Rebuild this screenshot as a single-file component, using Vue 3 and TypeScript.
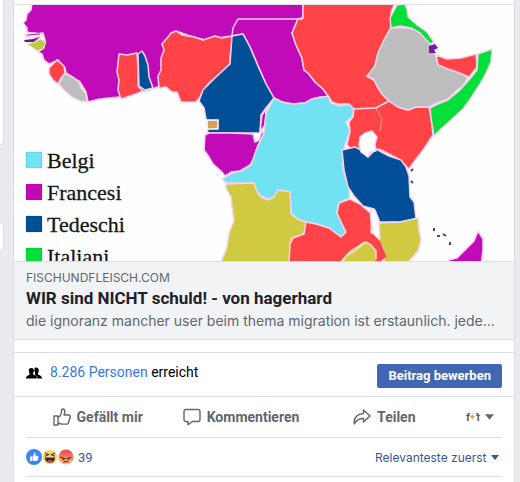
<script setup lang="ts">
import { ref } from 'vue'

interface Region {
  fill: string
  d: string
}

interface LegendEntry {
  label: string
  color: string
}

const colors = {
  french: '#c20bb8',
  british: '#ff4347',
  german: '#034f97',
  belgian: '#70e2f1',
  portuguese: '#d0ca40',
  italian: '#04df3c',
  spanish: '#d6a05c',
  free: '#bdbdbd',
}

const regions: Region[] = [
  { fill: colors.french, d: 'M32 3L31 10L27 14L26 20L23 23L27 28L27 32L35 34L43 33L45 40L44 48L38 52L42 54L44 60L49 64L58 60L65 68L66 73L80 82L86 92L88 102L100 99L119 97L150 90L160 86L176 31L190 36L205 40L232 36L243 34L250 47L258 66L266 84L274 98L282 102L292 104L305 103L312 99L320 97L329 97L323 89L315 82L309 74L304 70L302 58L296 45L292 33L298 19L303 18V3Z' },
  { fill: colors.british, d: 'M159 88L158 76L161 70L161 58L164 50L162 44L168 37L171 33L176 31L182 35L194 37L203 40L215 36L222 38L232 36L232 46L230 56L230 64L218 75L209 83L203 90L200 97L196 102L181 102L177 92L172 92L166 87Z' },
  { fill: colors.british, d: 'M119 54L127 55L137 53L138 68L138 86L143 91L133 95L121 99L118 90L119 80L117 72Z' },
  { fill: colors.german, d: 'M138 54L142 51L145 56L148 65L149 77L153 88L145 90L139 86Z' },
  { fill: colors.british, d: 'M49 68L53 64L57 60L64 66L65 73L61 78L58 84L53 80L49 74Z' },
  { fill: colors.free, d: 'M59 84L65 73L74 78L79 82L81 88L86 94L87 102L80 101L72 97L63 89Z' },
  { fill: colors.german, d: 'M232 36L243 34L250 47L258 66L266 84L274 98L266 108L261 115L260 133H208L206 119L204 108L199 101L203 90L215 78L230 64Z' },
  { fill: colors.french, d: 'M269 105L266 112L265 125L260 132L262 115Z' },
  { fill: colors.french, d: 'M205 135L209 133L232 133L253 134L255 142L259 140L262 131L264 134L258 145L254 158L250 165L240 171L231 172L225 176L221 171L213 164L209 157L204 150Z' },
  { fill: colors.belgian, d: 'M274 98L282 102L292 104L305 103L312 99L323 97L328 96L331 103L340 106L350 104L354 110L352 117L346 122L350 131L345 145L343 155L343 170L349 188L350 198L339 203L337 213L342 224L346 232L341 237L329 228L316 224L306 222L298 219L291 213L290 192L278 190L274 197L268 199L261 196L256 190L254 183L226 183L222 179L232 173L242 171L251 165L257 148L264 133L266 114Z' },
  { fill: colors.british, d: 'M303 3H395L391 12L391 27L384 40L378 53L375 65L373 70L367 76L374 80L377 86L382 94L389 101L376 108L354 109L349 104L338 104L332 102L329 97L323 89L315 82L309 74L304 70L302 58L296 45L292 33L298 19L303 18Z' },
  { fill: colors.british, d: 'M354 109L376 108L389 101L398 107L408 110L416 107L429 107L431 118L433 135L423 150L413 163L409 169L402 162L397 158L389 154L379 149L368 155L352 149L347 145L350 131L349 122L353 117Z' },
  { fill: colors.german, d: 'M342 150L355 147L361 150L368 157L376 149L389 156L401 160L406 167L409 176L410 197L414 202L416 219L400 222L379 222L374 209L363 206L354 196L348 187L344 170Z' },
  { fill: '#ffffff', d: 'M360 137L365 133L372 131L377 137L375 144L376 151L370 152L368 157L361 152L359 145Z' },
  { fill: colors.free, d: 'M391 28L405 28L418 30L430 42L435 54L439 65L448 69L457 72L468 77L463 86L457 90L448 99L437 103L429 107L416 107L408 110L398 107L389 101L382 94L377 86L374 80L367 76L375 66L378 53L384 40Z' },
  { fill: colors.italian, d: 'M397 5L405 4L407 9L408 17L417 25L427 32L434 42L430 44L420 33L411 28L400 26L391 28L390 18Z' },
  { fill: colors.british, d: 'M436 55L447 59L461 58L476 54L477 67L469 77L457 72L448 69L438 65Z' },
  { fill: colors.italian, d: 'M478 54L492 49L491 62L486 73L480 84L471 98L463 109L451 120L443 127L434 136L431 118L430 108L438 104L448 100L459 91L469 80L477 70Z' },
  { fill: colors.portuguese, d: 'M226 184L254 183L257 192L261 197L268 200L274 197L278 190L290 192L291 214L297 219L306 222L304 234L292 238L290 244L290 265H220L227 247L229 233L234 221L232 207L231 197L226 188Z' },
  { fill: colors.british, d: 'M306 222L316 224L329 228L341 237L346 232L342 224L337 213L339 203L350 199L360 204L368 211L372 214L371 232L374 240L381 245L384 256L380 265H289L290 244L293 238L304 234Z' },
  { fill: colors.portuguese, d: 'M379 223L400 222L418 218L419 230L421 240L418 251L411 259L405 265H383L385 256L382 246L379 243Z' },
  { fill: colors.portuguese, d: 'M341 265L346 256L355 251L366 242L371 245L376 251L376 259L380 265Z' },
  { fill: '#ffffff', d: 'M370 210L375 210L379 220L380 239L375 240L372 230Z' },
  { fill: colors.french, d: 'M446 265L449 260L457 258L465 250L474 241L478 231L483 239L483 250L481 265Z' },
]

const legend: LegendEntry[] = [
  { label: 'Belgi', color: colors.belgian },
  { label: 'Francesi', color: colors.french },
  { label: 'Tedeschi', color: colors.german },
  { label: 'Italiani', color: colors.italian },
]

const sortOrder = ref('relevant')
const liked = ref(false)
</script>

<template>
  <div class="page">
    <aside class="rail">
      <div class="rail-box rail-top"></div>
      <div class="rail-box rail-small"></div>
    </aside>

    <article class="card">
      <a class="preview" href="#">
        <svg class="map" viewBox="14 5 500 256" role="img" aria-label="Belgi, Francesi, Tedeschi, Italiani">
          <rect x="14" y="5" width="500" height="257" fill="#fefefe" />
          <g stroke="#f6d3ea" stroke-width="1.5" stroke-linejoin="round">
            <path v-for="(region, i) in regions" :key="i" :d="region.d" :fill="region.fill" />
          </g>
          <!-- Chad's northern border -->
          <path d="M232 36L233 28L238 19H303" fill="none" stroke="#f6d3ea" stroke-width="1.5" />
          <!-- Gambia, Casamance and Guinea-Bissau -->
          <path d="M24 34L34 32L43 34L42 38L25 38Z" fill="#f7dff2" />
          <path d="M27 35L40 34" stroke="#8c3a86" stroke-width="1" />
          <path d="M24 40L33 39L40 37L34 42L25 42Z" fill="#7b118f" />
          <path d="M27 44L35 42L40 39L46 42L43 49L37 51L32 47Z" fill="#bccb43" stroke="#f5e3cf" />
          <!-- Equatorial Guinea and Djibouti -->
          <rect x="207" y="120" width="11" height="9" :fill="colors.spanish" stroke="#ffffff" stroke-width="1.5" />
          <path d="M429 46L435 44L438 48L434 50L436 53L429 53Z" fill="#7618a5" />
          <!-- Border lines in Central Africa -->
          <path d="M376 109L382 118L380 131" fill="none" stroke="#f4a58f" />
          <path d="M341 262L350 252L365 242" fill="none" stroke="#fbe9a5" stroke-width="2" />
          <path d="M371 235L378 242L384 256L376 262" fill="none" stroke="#ff4347" stroke-width="4" />
          <!-- Islands -->
          <path d="M434 228v3M437 236h3M443 234l3 2M450 242v3M411 171l2-2M411 181l2 2" stroke="#6a356c" stroke-width="2" fill="none" />
          <g v-for="(entry, i) in legend" :key="entry.label">
            <rect x="26" :y="152 + i * 32" width="16" height="16" :fill="entry.color" stroke="#00000022" />
            <text class="legend" x="47" :y="168 + i * 32">{{ entry.label }}</text>
          </g>
        </svg>
        <div class="summary">
          <span class="domain">FISCHUNDFLEISCH.COM</span>
          <strong class="title">WIR sind NICHT schuld! - von hagerhard</strong>
          <span class="description">die ignoranz mancher user beim thema migration ist erstaunlich. jede...</span>
        </div>
      </a>

      <section class="reach">
        <svg class="people" viewBox="0 0 16 12" aria-hidden="true">
          <path d="M10 0.5c2 0 3 1.300 2.800 3.300-.1 1.500-.8 2.200-.8 3.100 0 1.100 3.500 1.300 3.800 3.300L16 11.500h-4.500c-.2-2.200-1.200-2.800-3-3.500.9-1 .8-1.900.2-3.300C8 2.500 8.300.5 10 .5z" />
          <path d="M5.300 1c1.900 0 2.800 1.200 2.600 3.100-.1 1.300-.9 2-.9 3 0 1.200 3.500 1.200 3.800 3.300v1.100H0c0-3.200 3.700-2.900 3.700-4.400 0-.9-.8-1.600-.9-3C2.600 2.200 3.500 1 5.300 1z" />
        </svg>
        <p class="reach-text"><a href="#">8.286 Personen</a> erreicht</p>
        <button class="promote" type="button">Beitrag bewerben</button>
      </section>

      <div class="actions">
        <button class="action" type="button" :aria-pressed="liked" @click="liked = !liked">
          <svg class="icon" viewBox="0 0 18 18" aria-hidden="true">
            <path d="M1 8h4v9H1zM5 9.500C8 8 8.500 5.500 8.500 3 8.500 1.500 9 1 9.800 1c1.400 0 2 1.200 2 2.600 0 1.500-.5 2.400-.8 3.400h4.500c1.200 0 1.800.8 1.800 1.700 0 .7-.4 1.100-.8 1.300.5.7.4 1.700-.4 2.200.3.900 0 1.600-.7 2 .2 1.300-.5 1.900-1.800 1.900H9.500c-1.700 0-2.500-.8-4.500-.8" />
          </svg>
          Gefällt mir
        </button>
        <button class="action" type="button">
          <svg class="icon" viewBox="0 0 18 18" aria-hidden="true">
            <path d="M3 1.500h12Q17 1.500 17 3.500v8q0 2-2 2H9.500L5 16.700v-3.200H3q-2 0-2-2v-8q0-2 2-2z" />
          </svg>
          Kommentieren
        </button>
        <button class="action" type="button">
          <svg class="icon" viewBox="0 0 18 18" aria-hidden="true">
            <path d="M10.500 2L17 8l-6.500 6v-3.500C6 10.300 3.500 12 1.200 16 .8 10 4 6 10.500 5.500z" />
          </svg>
          Teilen
        </button>
        <button class="identity" type="button" aria-label="f+f">
          <svg class="brand" viewBox="0 0 16 12" aria-hidden="true">
            <text x="1" y="10">f</text>
            <text class="plus" x="5" y="9">+</text>
            <text x="0" y="10" transform="translate(15 0) scale(-1 1)">f</text>
          </svg>
          <svg class="caret" viewBox="0 0 10 6" aria-hidden="true"><path d="M0 0h10L5 6z" /></svg>
        </button>
      </div>

      <footer class="feedback">
        <a class="reactions" href="#">
          <svg class="faces" viewBox="0 0 48 16" aria-hidden="true">
            <defs>
              <linearGradient id="anger" x1="0" y1="0" x2="0" y2="1">
                <stop offset="0.100" stop-color="#ee4b57" />
                <stop offset="0.900" stop-color="#fbb66c" />
              </linearGradient>
            </defs>
            <circle cx="40" cy="8" r="7.500" fill="url(#anger)" />
            <path d="M35 8.300L39 9.800M45 8.300L41 9.800M37.800 13Q40 12 42.200 13" fill="none" stroke="#4b2634" stroke-width="1.100" stroke-linecap="round" />
            <circle cx="37.300" cy="10.200" r="0.800" fill="#4b2634" />
            <circle cx="42.700" cy="10.200" r="0.800" fill="#4b2634" />
            <circle cx="24" cy="8" r="8" fill="#fff" />
            <circle cx="24" cy="8" r="7.300" fill="#fbd56f" />
            <path d="M19 4l3.500 1.800L19 7.300M29 4l-3.500 1.800L29 7.300" fill="none" stroke="#4b3a2b" stroke-width="1.100" />
            <path d="M19 8.500h10c0 3.300-2 5.300-5 5.300s-5-2-5-5.300z" fill="#3d2835" />
            <path d="M21 12.300q3-2 6 0-3 2.500-6 0z" fill="#f1505f" />
            <circle cx="8" cy="8" r="8" fill="#3f84f2" />
            <path d="M4 7.500h2v4.500H4zM6.500 7.500C8 6.500 7.500 5 8 3.800c.9-.5 1.800.3 1.600 1.500L9.300 6.700h2.200c1 0 1.200.9.700 1.400.4.400.3 1-.1 1.300.2.500 0 .9-.4 1.200.1.800-.4 1.400-1.300 1.400H8.300c-.8 0-1.200-.3-1.800-.5z" fill="#fff" />
          </svg>
          <span>39</span>
        </a>
        <label class="sort">
          <select v-model="sortOrder" aria-label="Relevanteste zuerst">
            <option value="relevant">Relevanteste zuerst</option>
          </select>
          <svg class="caret small" viewBox="0 0 10 6" aria-hidden="true"><path d="M0 0h10L5 6z" /></svg>
        </label>
      </footer>
    </article>
  </div>
</template>

<style>
body {
  background: #e9ebee;
}
</style>

<style scoped>
.page {
  display: grid;
  grid-template-columns: 4px 1fr;
  column-gap: 9px;
  min-height: 100vh;
  box-sizing: border-box;
  padding-right: 5px;
  font-family: Roboto, "Liberation Sans", sans-serif;
  color: #1d2129;
}

.rail {
  display: flex;
  flex-direction: column;
  gap: 77px;
}

.rail-box {
  background: #fff;
  border: 1px solid #dddfe2;
  border-left: 0;
  box-sizing: border-box;
}

.rail-top {
  height: 145px;
  border-top: 0;
  border-radius: 0 0 3px 0;
}

.rail-small {
  height: 29px;
  border-radius: 0 3px 3px 0;
}

.card {
  min-width: 0;
  padding-top: 4px;
  background: #fff;
  border: 1px solid #dddfe2;
  border-width: 0 1px;
}

.preview {
  display: block;
  color: inherit;
  text-decoration: none;
  border: 1px solid #dddfe2;
  border-width: 1px 0;
}

.map {
  display: block;
  width: 100%;
}

.legend {
  font-family: "Liberation Serif", serif;
  font-size: 22px;
  fill: #161616;
  stroke: #161616;
  stroke-width: 0.3px;
}

.summary {
  display: flex;
  flex-direction: column;
  padding: 8px 12px;
  background: #f2f3f5;
  border-top: 1px solid #dddfe2;
}

.domain {
  font-family: Inter, Roboto, sans-serif;
  font-size: 12px;
  line-height: 16px;
  color: #606770;
}

.title {
  font-size: 17px;
  line-height: 24px;
  font-weight: 700;
}

.description {
  overflow: hidden;
  font-family: Inter, Roboto, sans-serif;
  font-size: 14px;
  line-height: 21px;
  color: #606770;
  white-space: nowrap;
}

.reach {
  display: flex;
  align-items: center;
  gap: 8px;
  height: 43px;
  margin-top: 12px;
  padding: 0 12px;
  border: 1px solid #dddfe2;
  border-width: 1px 0;
}

.people {
  width: 16px;
  height: 12px;
  margin-bottom: 4px;
}

.reach-text {
  flex: 1;
  margin: 0 0 6px;
  font-size: 14px;
  line-height: 18px;
  color: #000;
}

.reach-text a {
  color: #3578e5;
  text-decoration: none;
}

button,
select {
  margin: 0;
  padding: 0;
  border: 0;
  background: none;
  font-family: inherit;
  cursor: pointer;
}

.promote {
  height: 24px;
  margin-top: 2px;
  padding: 0 11px;
  border-radius: 2px;
  background: #4267b2;
  color: #fff;
  font-size: 13px;
  font-weight: 700;
}

.actions {
  display: flex;
  height: 40px;
  margin: 0 12px;
  border-bottom: 1px solid #dddfe2;
}

.action {
  display: flex;
  flex: 1;
  align-items: center;
  justify-content: center;
  gap: 6px;
  color: #606770;
  font-size: 14px;
  font-weight: 700;
}

.icon {
  width: 18px;
  height: 18px;
  fill: none;
  stroke: #606770;
  stroke-width: 1.4;
  stroke-linejoin: round;
}

.identity {
  display: flex;
  align-items: center;
  justify-content: flex-end;
  gap: 4px;
  width: 46px;
  padding-right: 8px;
}

.brand {
  width: 16px;
  height: 12px;
  font-size: 11px;
  font-weight: 700;
  fill: #5f5c58;
}

.plus {
  font-size: 9px;
  fill: #f39a1f;
}

.caret {
  width: 9px;
  height: 6px;
  fill: #606770;
}

.feedback {
  display: flex;
  align-items: center;
  justify-content: space-between;
  height: 38px;
  margin: 0 12px;
  border-bottom: 1px solid #dddfe2;
}

.reactions {
  display: flex;
  align-items: center;
  gap: 4px;
  color: #385898;
  font-size: 13px;
  text-decoration: none;
}

.faces {
  width: 48px;
  height: 16px;
}

.sort {
  display: flex;
  align-items: center;
  gap: 4px;
  padding-right: 3px;
}

.sort select {
  appearance: none;
  color: #385898;
  font-family: Inter, Roboto, sans-serif;
  font-size: 12px;
}

.small {
  width: 8px;
  height: 5px;
  fill: #385898;
}
</style>
